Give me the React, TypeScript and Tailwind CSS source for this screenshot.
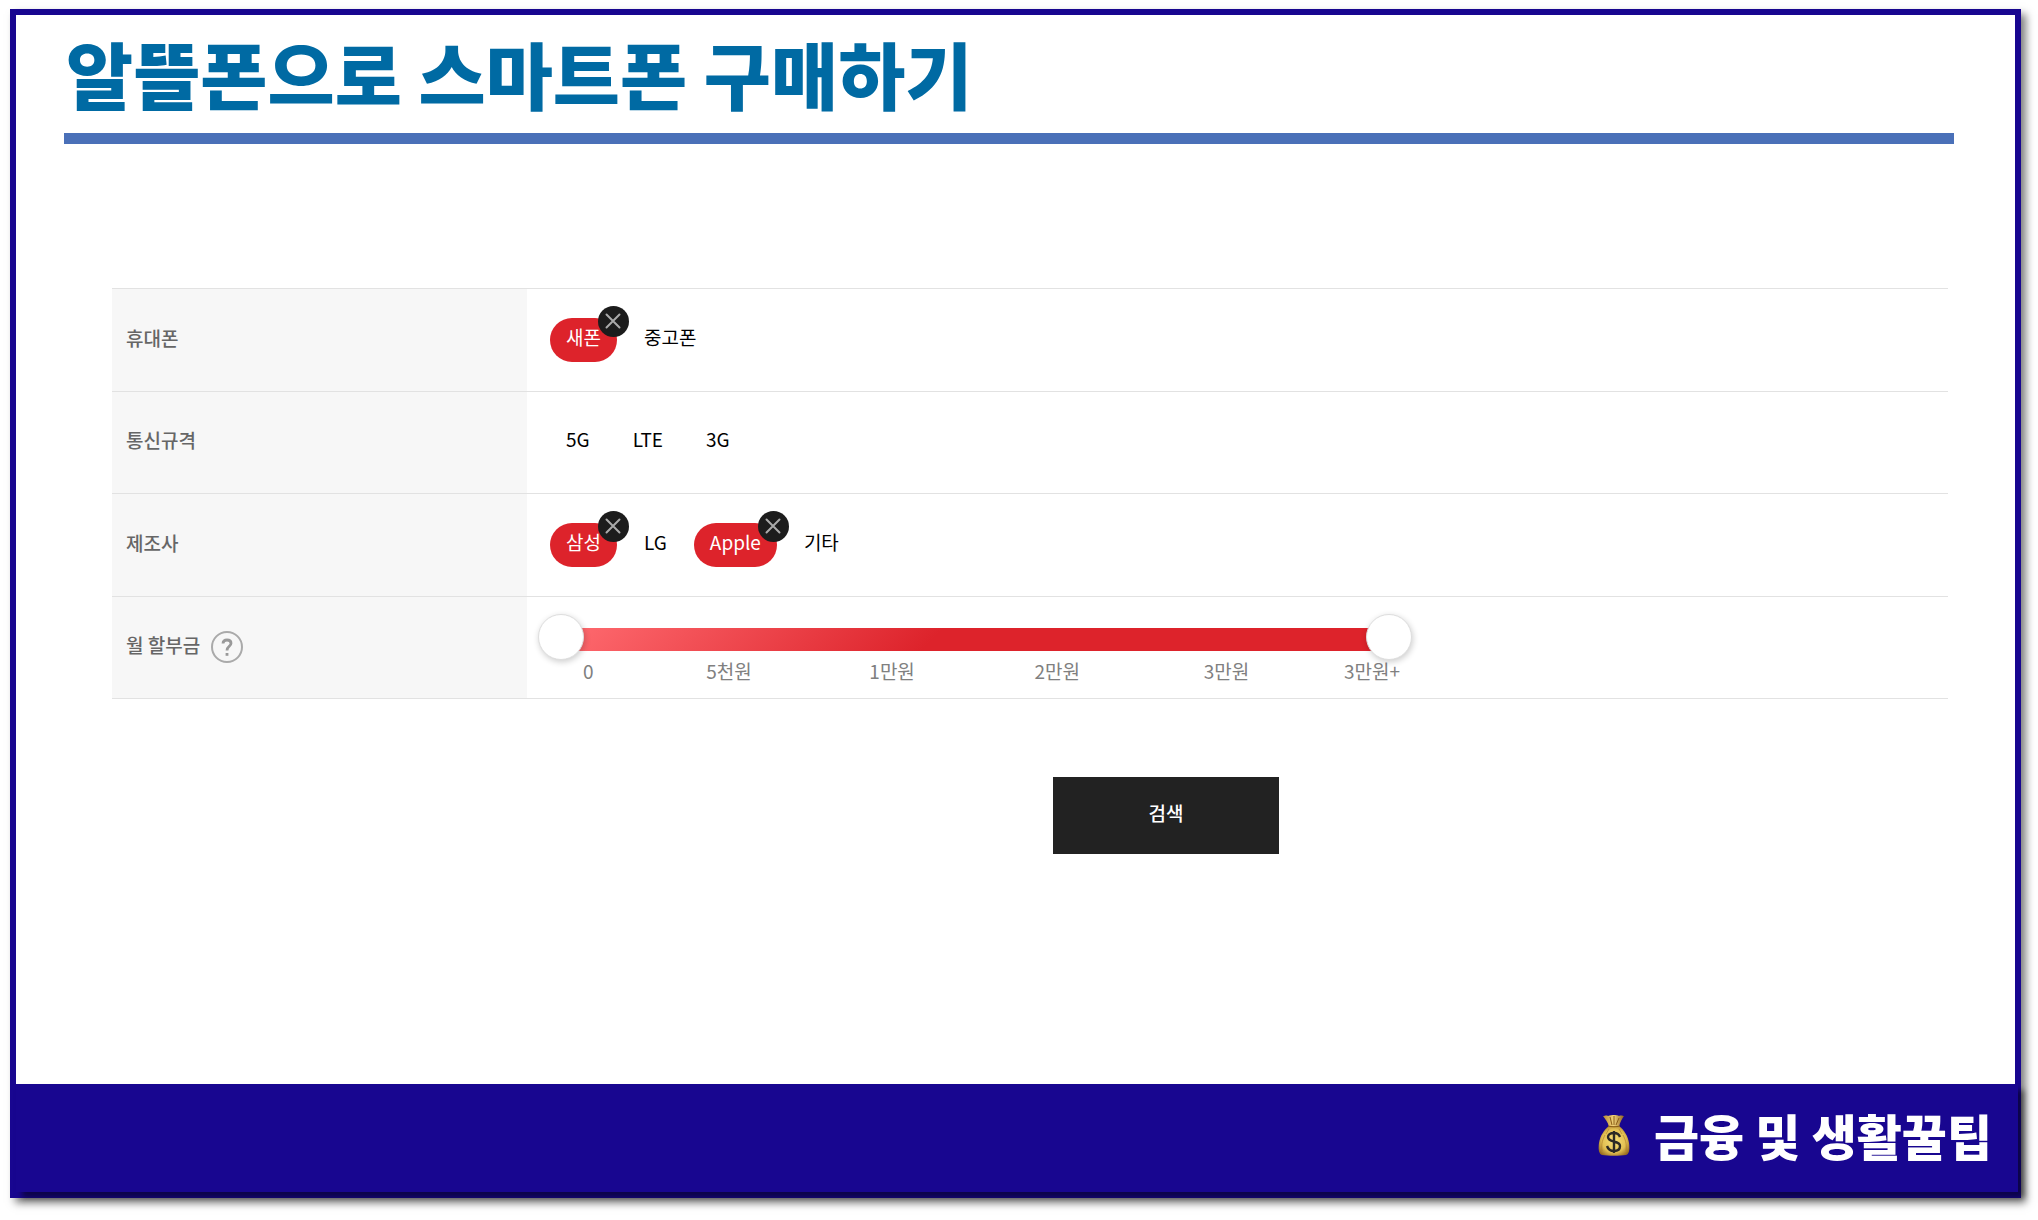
import { useState } from 'react';

const initialFilters = [
  { label: '휴대폰', options: ['새폰', '중고폰'], selected: ['새폰'] },
  { label: '통신규격', options: ['5G', 'LTE', '3G'], selected: [] as string[] },
  { label: '제조사', options: ['삼성', 'LG', 'Apple', '기타'], selected: ['삼성', 'Apple'] },
];

const priceMarks = ['0', '5천원', '1만원', '2만원', '3만원', '3만원+'];

const rangeClass =
  'pointer-events-none absolute inset-0 h-full w-full appearance-none bg-transparent outline-none ' +
  '[&::-webkit-slider-thumb]:pointer-events-auto [&::-webkit-slider-thumb]:size-[46px] [&::-webkit-slider-thumb]:cursor-pointer ' +
  '[&::-webkit-slider-thumb]:appearance-none [&::-webkit-slider-thumb]:rounded-full [&::-webkit-slider-thumb]:border ' +
  '[&::-webkit-slider-thumb]:border-[#dedede] [&::-webkit-slider-thumb]:bg-white ' +
  '[&::-webkit-slider-thumb]:shadow-[1px_2px_6px_rgba(0,0,0,0.2)]';

interface OptionChipProps {
  label: string;
  selected: boolean;
  onToggle: () => void;
}

function OptionChip({ label, selected, onToggle }: OptionChipProps) {
  return (
    <button
      type="button"
      aria-pressed={selected}
      onClick={onToggle}
      className={`relative h-11 rounded-full px-4 pb-1.5 text-[19px] leading-9 ${
        selected ? 'bg-[#dd232b] text-white' : 'text-black'
      }`}
    >
      {label}
      {selected && (
        <span className="absolute -top-3 -right-3 flex size-[31px] items-center justify-center rounded-full bg-[#1c1c1c]">
          <svg viewBox="0 0 16 16" className="size-4" stroke="#aaa" strokeWidth="2" strokeLinecap="round">
            <path d="M1.5 1.5 14.5 14.5M14.5 1.5 1.5 14.5" />
          </svg>
        </span>
      )}
    </button>
  );
}

function PriceSlider() {
  const [min, setMin] = useState(0);
  const [max, setMax] = useState(100);

  return (
    <div className="-ml-3 w-[874px] max-w-full pt-0.5">
      <div className="relative h-[46px]">
        <div className="flex h-full items-center px-[23px] pt-1">
          <div className="h-[23px] w-full bg-linear-[135deg,#ff6b70,#dd232b_45%]" />
        </div>
        <input
          type="range"
          aria-label="최소 월 할부금"
          value={min}
          onChange={(e) => setMin(Math.min(Number(e.target.value), max))}
          className={rangeClass}
        />
        <input
          type="range"
          aria-label="최대 월 할부금"
          value={max}
          onChange={(e) => setMax(Math.max(Number(e.target.value), min))}
          className={rangeClass}
        />
      </div>
      <div className="grid grid-cols-[123fr_163fr_165fr_169fr_140fr_68fr] pl-[45px] text-[19px] leading-[22px] font-normal text-[#808080]">
        {priceMarks.map((mark) => (
          <span key={mark} className="whitespace-nowrap">{mark}</span>
        ))}
      </div>
    </div>
  );
}

function MoneyBag() {
  return (
    <svg viewBox="0 0 32 42" className="h-[42px] w-8" aria-hidden="true">
      <defs>
        <radialGradient id="bag" cx="0.5" cy="0.5" r="0.6">
          <stop offset="0" stopColor="#f7df78" />
          <stop offset="0.65" stopColor="#e2bf52" />
          <stop offset="1" stopColor="#966a20" />
        </radialGradient>
        <linearGradient id="neck" x1="0" x2="1">
          <stop offset="0" stopColor="#b98a34" />
          <stop offset="0.5" stopColor="#f0d27a" />
          <stop offset="1" stopColor="#8f621f" />
        </linearGradient>
      </defs>
      <path d="M5 2c2 0 3-1 5 0 2-1 4-1 6-1s4 0 5 1c2-1 4 0 5 0-2 3-4 6-5 11H11C10 8 7 5 5 2Z" fill="url(#neck)" />
      <path d="M11 12h10c5 4 9 10 10 17 1 7 0 11-3 12-6 1-18 1-24 0-3-1-4-5-3-12 1-7 5-13 10-17Z" fill="url(#bag)" />
      <path d="M10 12c4 1 8 1 12 0M12 3l2 8M16 2v9M21 4l-3 7" fill="none" stroke="#8a5d18" strokeWidth="1" />
      <path d="M7 21c-2 4-4 8-3 16M25 21c2 4 4 8 3 16M11 15l-3 5M21 15l3 5" fill="none" stroke="#a87a2a" strokeWidth="1" opacity="0.6" />
      <path
        d="M22 23c-1-3-3-4-6-4-4 0-6 2-6 4 0 6 12 3 12 9 0 3-2 5-6 5s-6-2-7-5M16 17v22"
        fill="none"
        stroke="#2c2925"
        strokeWidth="2.4"
      />
    </svg>
  );
}

export default function App() {
  const [filters, setFilters] = useState(initialFilters);

  const toggle = (row: number, option: string) => {
    setFilters(filters.map((f, i) => {
      if (i !== row) return f;
      const selected = f.selected.includes(option)
        ? f.selected.filter((o) => o !== option)
        : [...f.selected, option];
      return { ...f, selected };
    }));
  };

  return (
    <div className="flex min-h-screen bg-white pt-[9px] pr-[17px] pb-[22px] pl-[10px] font-['Noto_Sans_CJK_KR',sans-serif]">
      <div className="flex flex-1 flex-col border-6 border-[#180690] bg-white shadow-[5px_5px_8px_rgba(0,0,0,0.5)]">
        <header className="mr-[61px] ml-12 border-b-[11px] border-[#4a70b8] pt-3 pb-4">
          <h1 className="pl-0.5 text-[73px] leading-[90px] font-black text-[#006aa3]">알뜰폰으로 스마트폰 구매하기</h1>
        </header>

        <main className="mt-36 mr-[67px] mb-16 ml-24">
          <table className="h-[411px] w-full border-collapse">
            <tbody>
              {filters.map((filter, row) => (
                <tr key={filter.label} className="h-1/4 border-y border-[#e2e2e2]">
                  <th scope="row" className="w-[415px] bg-[#f7f7f7] pb-1 pl-3.5 text-left text-[19px] font-medium text-[#666]">
                    {filter.label}
                  </th>
                  <td className="pl-[23px] font-normal">
                    <div className="flex gap-[11px]">
                      {filter.options.map((option) => (
                        <OptionChip
                          key={option}
                          label={option}
                          selected={filter.selected.includes(option)}
                          onToggle={() => toggle(row, option)}
                        />
                      ))}
                    </div>
                  </td>
                </tr>
              ))}
              <tr className="h-1/4 border-y border-[#e2e2e2]">
                <th scope="row" className="w-[415px] bg-[#f7f7f7] pl-3.5 text-left text-[19px] font-medium text-[#666]">
                  <div className="flex items-center gap-[11px]">
                    <span className="pb-1">월 할부금</span>
                    <button
                      type="button"
                      aria-label="월 할부금 도움말"
                      className="flex size-8 items-center justify-center rounded-full border-2 border-[#aaa] text-[#999]"
                    >
                      <svg viewBox="0 0 12 18" className="h-[18px] w-3" fill="none" stroke="currentColor" strokeWidth="2.8">
                        <path d="M2 5.500C2 3 3.500 2 6 2S10 3 10 5.200C10 8.500 6 8 6 12.500" />
                        <path d="M6 15v2.800" />
                      </svg>
                    </button>
                  </div>
                </th>
                <td className="pl-[23px]">
                  <PriceSlider />
                </td>
              </tr>
            </tbody>
          </table>

          <div className="mt-[78px] flex justify-center pl-[272px]">
            <button type="button" className="h-[77px] w-[226px] bg-[#222] pb-1 text-[19px] font-medium text-white">
              검색
            </button>
          </div>
        </main>

        <footer className="mt-auto -mr-[3px] flex h-[108px] items-center justify-end gap-6 bg-[#180690] pr-[26px] pb-1.5 shadow-[6px_6px_6px_rgba(0,0,0,0.5)]">
          <MoneyBag />
          <p className="text-[49px] leading-[60px] font-black text-white">금융 및 생활꿀팁</p>
        </footer>
      </div>
    </div>
  );
}
